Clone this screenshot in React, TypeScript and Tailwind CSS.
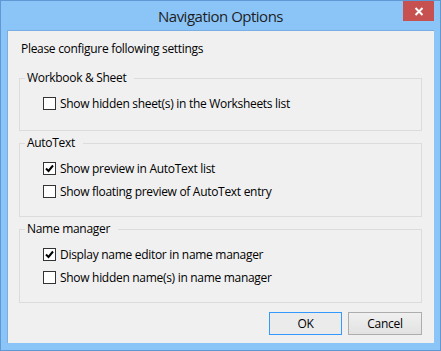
import { useState } from "react";

type Option = { id: string; label: string; checked: boolean };

const groups: { title: string; options: Option[]; pb: string }[] = [
  {
    title: "Workbook & Sheet",
    pb: "pb-[15px]",
    options: [{ id: "hiddenSheets", label: "Show hidden sheet(s) in the Worksheets list", checked: false }],
  },
  {
    title: "AutoText",
    pb: "pb-[13px]",
    options: [
      { id: "preview", label: "Show preview in AutoText list", checked: true },
      { id: "floating", label: "Show floating preview of AutoText entry", checked: false },
    ],
  },
  {
    title: "Name manager",
    pb: "pb-[13px]",
    options: [
      { id: "editor", label: "Display name editor in name manager", checked: true },
      { id: "hiddenNames", label: "Show hidden name(s) in name manager", checked: false },
    ],
  },
];

function CheckRow({ option }: { option: Option }) {
  const [checked, setChecked] = useState(option.checked);
  return (
    <label className="flex h-[23px] items-center cursor-default" onClick={() => setChecked(!checked)}>
      <span className="ml-[18px] flex h-[13px] w-[13px] items-center justify-center border border-[#333333] bg-white">
        {checked && (
          <svg width="9" height="9" viewBox="0 0 9 9">
            <path d="M1 4.5 L3.5 7 L8 1.5" fill="none" stroke="#000" strokeWidth="2" />
          </svg>
        )}
      </span>
      <span className="ml-[4px]">{option.label}</span>
    </label>
  );
}

export default function App() {
  return (
    <div className="h-[351px] w-[441px] border border-[#5f98d3] bg-[#8bc5f8] font-['Open_Sans',sans-serif] text-[12px] leading-[16px] tracking-[-0.3px] text-black">
      <div className="relative flex h-[29px] items-center justify-center">
        <span className="text-[15px] tracking-[-0.5px] text-[#1e1e1e]">Navigation Options</span>
        <button className="absolute right-[6px] top-0 flex h-[20px] w-[31px] items-center justify-center bg-[#c75050]">
          <svg width="10" height="9" viewBox="0 0 10 9">
            <path d="M1.5 1 L8.5 8 M8.5 1 L1.5 8" stroke="#fff" strokeWidth="2" />
          </svg>
        </button>
      </div>
      <div className="mx-[6px] h-[313px] border-l border-t border-[#7aaee2] bg-[#f0f0f0]">
        <p className="pl-[13px] pt-[10px]">Please configure following settings</p>
        <div className="mt-[13px] flex flex-col gap-[4px] pl-[11px] pr-[12px]">
          {groups.map((g) => (
            <fieldset key={g.title} className={`border border-[#dcdcdc] pl-[5px] pt-[6px] ${g.pb}`}>
              <legend className="px-[2px] pr-[8px]">{g.title}</legend>
              {g.options.map((o) => (
                <CheckRow key={o.id} option={o} />
              ))}
            </fieldset>
          ))}
        </div>
        <div className="mt-[9px] flex justify-end gap-[6px] pr-[12px]">
          <button className="h-[23px] w-[73px] border border-[#3399ff] bg-[#ebebeb]">OK</button>
          <button className="h-[23px] w-[74px] border border-[#adadad] bg-gradient-to-b from-[#f0f0f0] to-[#e2e2e2]">Cancel</button>
        </div>
      </div>
    </div>
  );
}
